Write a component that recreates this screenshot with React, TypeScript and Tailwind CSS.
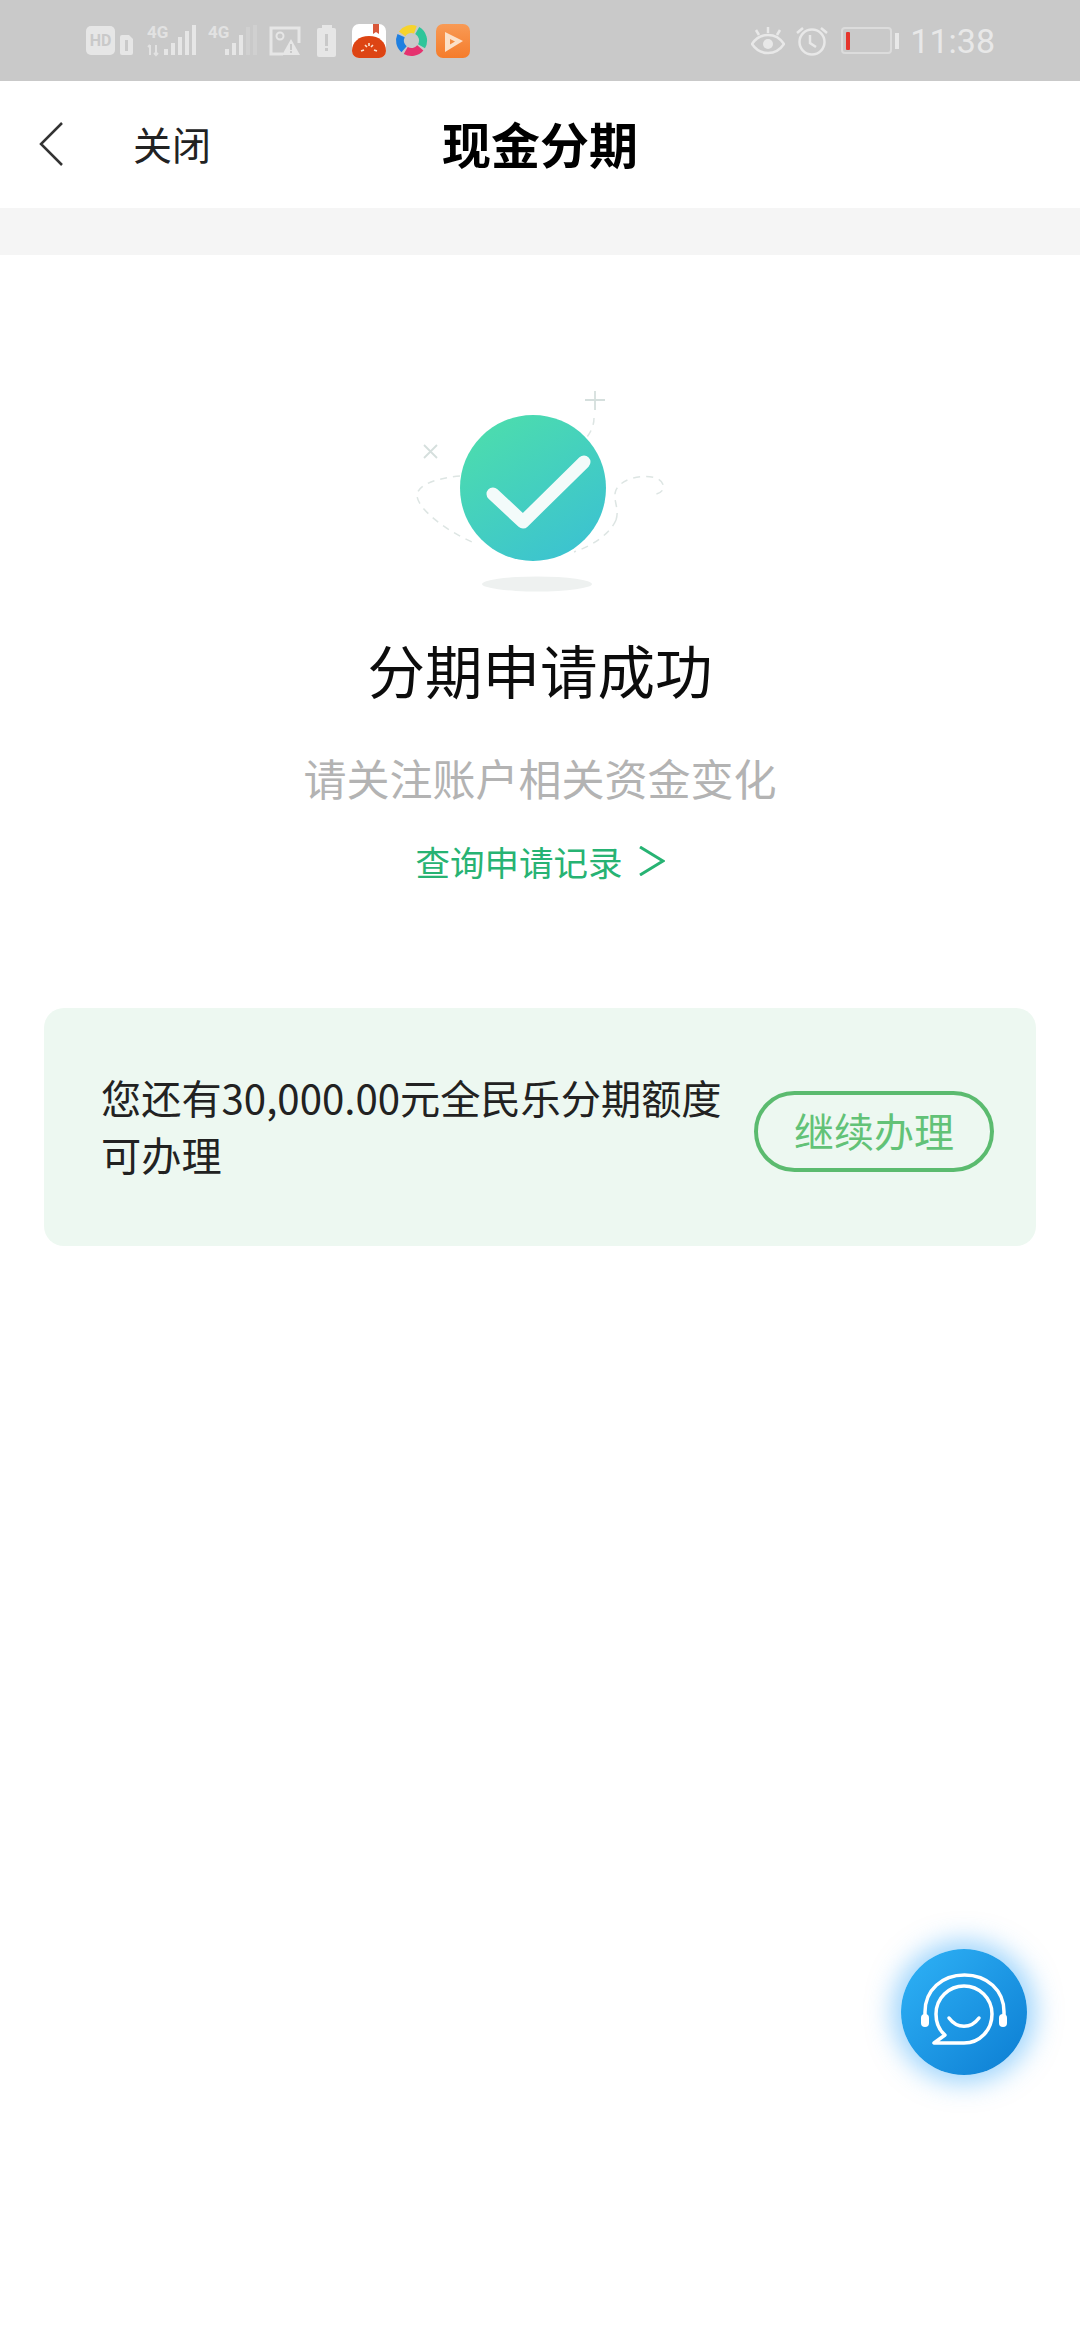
const cjk = "font-['Noto_Sans_CJK_SC','Noto_Sans',sans-serif]";

function HdIcon() {
  return (
    <svg width="48" height="30" viewBox="0 0 48 30" className="mr-[13px]">
      <rect x="0" y="0" width="29" height="29" rx="5" fill="#e6e6e6" />
      <text x="14.5" y="20" textAnchor="middle" fontSize="16" fontWeight="700" fontFamily="Roboto, sans-serif" fill="#c9c9c9">HD</text>
      <path d="M36 9h7l4 4v14a2 2 0 0 1-2 2h-9a2 2 0 0 1-2-2V11a2 2 0 0 1 2-2z" fill="#e6e6e6" />
      <rect x="39" y="14" width="3" height="11" fill="#c9c9c9" />
    </svg>
  );
}

function SignalIcon({ bars, faded, arrows }: { bars: number[]; faded: number; arrows?: boolean }) {
  return (
    <svg width="50" height="36" viewBox="0 -4 50 36" className="mb-[4px] mr-[11px]">
      <text x="0" y="13" fontSize="17" fontWeight="700" fontFamily="Roboto, sans-serif" fill="#e2e2e2">4G</text>
      {arrows && <path d="M3 20v10M1 22l2-2M9 20v10M7 28l2 2 2-2" stroke="#e2e2e2" strokeWidth="2" fill="none" />}
      {bars.map((h, i) => (
        <rect key={i} x={17 + i * 7} y={30 - h} width="4" height={h} fill="#e6e6e6" opacity={i >= bars.length - faded ? 0.25 : 1} />
      ))}
    </svg>
  );
}

function ImageWarnIcon() {
  return (
    <svg width="32" height="30" viewBox="0 0 32 30" className="mr-[16px]">
      <path d="M14 28H2V2h28v15" stroke="#e6e6e6" strokeWidth="3" fill="none" />
      <circle cx="11" cy="10" r="3.5" stroke="#e6e6e6" strokeWidth="2" fill="none" />
      <path d="M22 13l9 16H13z" fill="#e6e6e6" />
      <rect x="21" y="18" width="2" height="6" fill="#c9c9c9" />
      <rect x="21" y="25" width="2" height="2" fill="#c9c9c9" />
    </svg>
  );
}

function BatteryAlertIcon() {
  return (
    <svg width="20" height="32" viewBox="0 0 20 32" className="mr-[15px]">
      <rect x="5" y="0" width="10" height="3" fill="#e6e6e6" />
      <rect x="0" y="3" width="19" height="29" rx="2" fill="#e6e6e6" />
      <rect x="8" y="9" width="3" height="12" fill="#c9c9c9" />
      <rect x="8" y="23" width="3" height="3" fill="#c9c9c9" />
    </svg>
  );
}

function ReaderAppIcon() {
  return (
    <svg width="34" height="34" viewBox="0 0 34 34" className="mr-[9px]">
      <rect width="34" height="34" rx="7" fill="#ffffff" />
      <path d="M0 27c0-9 7-15 17-15s17 6 17 15a7 7 0 0 1-7 7H7a7 7 0 0 1-7-7z" fill="#dd4413" />
      <path d="M21 0h6v10l-3-2-3 2z" fill="#d9583a" />
      <path d="M9 27l3-1M13 21l2 2M21 21l-2 2M25 27l-3-1M17 19v3" stroke="#fbe3d0" strokeWidth="1.6" />
    </svg>
  );
}

function PetalAppIcon() {
  return (
    <svg width="33" height="33" viewBox="0 0 33 33" fill="none" strokeWidth="8" className="mr-[8px]">
      <path d="M7.100 9.900A11.500 11.500 0 0 1 20.400 5.700" stroke="#f6d32d" />
      <path d="M22.250 6.500A11.500 11.500 0 0 1 26.500 22.250" stroke="#2fc59a" />
      <path d="M25.300 23.900A11.500 11.500 0 0 1 10.750 26.500" stroke="#e5326f" />
      <path d="M9.100 25.300A11.500 11.500 0 0 1 6.100 11.600" stroke="#1f7fe0" />
    </svg>
  );
}

function PlayAppIcon() {
  return (
    <svg width="34" height="34" viewBox="0 0 34 34">
      <defs>
        <linearGradient id="playBg" x1="0" y1="0" x2="0" y2="1">
          <stop offset="0" stopColor="#f89a55" />
          <stop offset="1" stopColor="#f57c2b" />
        </linearGradient>
      </defs>
      <rect width="34" height="34" rx="7" fill="url(#playBg)" />
      <path d="M9 8l18 9L9 28z" fill="#fbe0c8" />
      <path d="M14 15l5 2.500-5 3z" fill="#f58a3d" />
    </svg>
  );
}

function EyeIcon() {
  return (
    <svg width="34" height="30" viewBox="0 0 34 30" fill="none" stroke="#e8e8e8" strokeWidth="2.5" className="mr-[11px]">
      <path d="M1 18c4-6 10-9 16-9s12 3 16 9c-4 6-10 9-16 9S5 24 1 18z" />
      <circle cx="17" cy="18" r="5" fill="#e8e8e8" stroke="none" />
      <path d="M17 7V1M8 9L5 4M26 9l3-5" />
    </svg>
  );
}

function AlarmIcon() {
  return (
    <svg width="32" height="30" viewBox="0 0 32 30" fill="none" stroke="#e8e8e8" strokeWidth="2.5" className="mr-[13px]">
      <circle cx="16" cy="16" r="12.5" />
      <path d="M14 9v8l6 4M1 7l6-5M31 7l-6-5" />
    </svg>
  );
}

function BatteryIcon() {
  return (
    <div className="mr-[11px] flex items-center">
      <div className="flex h-[27px] w-[51px] items-center rounded-[4px] border-2 border-[#dcdcdc] pl-[3px]">
        <div className="h-[18px] w-[4px] rounded-[1px] bg-[#e5352c]" />
      </div>
      <div className="ml-[3px] h-[16px] w-[4px] bg-[#e8e8e8]" />
    </div>
  );
}

function SuccessIllustration() {
  return (
    <svg width="290" height="240" viewBox="0 0 290 240" fill="none" className="mr-[10px]">
      <defs>
        <linearGradient id="okBg" x1="0.2" y1="0.05" x2="0.8" y2="0.95">
          <stop offset="0" stopColor="#4cdcae" />
          <stop offset="1" stopColor="#3cc3d0" />
        </linearGradient>
      </defs>
      <g stroke="#dde5e3" strokeWidth="1.5" strokeDasharray="7 6">
        <path d="M70 106C48 108 28 114 27 125c0 14 30 36 55 47" />
        <path d="M226 150c4-12-4-20 0-30 6-12 26-16 40-12 10 4 10 14 0 16" />
        <path d="M204 48c0 10-6 22-20 30" />
        <path d="M226 150c-6 14-24 26-42 32" />
      </g>
      <path d="M205 21v19M195 30h20" stroke="#d5dfdd" strokeWidth="1.8" />
      <path d="M34 75l13 13M47 75L34 88" stroke="#d5dfdd" strokeWidth="1.8" />
      <circle cx="143" cy="118" r="73" fill="url(#okBg)" />
      <path d="M103 124l30 28 61-60" stroke="#f3fbfa" strokeWidth="13" strokeLinecap="round" strokeLinejoin="round" />
      <ellipse cx="147" cy="214" rx="55" ry="7.5" fill="#eef1f0" />
    </svg>
  );
}

function HeadsetIcon() {
  return (
    <svg width="126" height="126" viewBox="21 29 126 126" fill="none" stroke="#ffffff" strokeWidth="3.5" strokeLinecap="round">
      <path d="M45 95V92C45 70 62 55 84.500 55S124 70 124 92v3" />
      <path d="M54 123H84C100 123 112 110 112 94C112 78 99 66 84 66S56 78 56 94C56 103 59 110 65 115Z" strokeLinejoin="round" />
      <path d="M69 98c8 11 22 11 30 0" />
      <rect x="41" y="94" width="8" height="13" rx="4" fill="#ffffff" stroke="none" />
      <rect x="119" y="94" width="8" height="13" rx="4" fill="#ffffff" stroke="none" />
    </svg>
  );
}

export default function App() {
  return (
    <div className={`relative h-[2340px] w-[1080px] overflow-hidden bg-white ${cjk}`}>
      {/* Status bar */}
      <div className="flex h-[81px] items-center justify-between bg-[#c9c9c9] pl-[86px] pr-[85px]">
        <div className="flex items-center">
          <HdIcon />
          <SignalIcon bars={[6, 12, 18, 24, 30]} faded={0} arrows />
          <SignalIcon bars={[6, 12, 20, 28, 30]} faded={2} />
          <ImageWarnIcon />
          <BatteryAlertIcon />
          <ReaderAppIcon />
          <PetalAppIcon />
          <PlayAppIcon />
        </div>
        <div className="flex items-center">
          <EyeIcon />
          <AlarmIcon />
          <BatteryIcon />
          <span className="font-['Roboto',sans-serif] text-[34px] leading-none font-normal text-[#e8e8e8]">11:38</span>
        </div>
      </div>

      {/* Nav bar */}
      <div className="relative flex h-[127px] items-center pl-[39px]">
        <svg width="24" height="44" viewBox="0 0 24 44" fill="none" stroke="#333333" strokeWidth="2.500" className="mb-[2px]">
          <path d="M23 1L2 22l21 21" />
        </svg>
        <span className="mb-[3px] ml-[70px] text-[39px] leading-none text-[#222222]">关闭</span>
        <div className="absolute inset-x-0 top-0 flex h-full items-center justify-center pb-[5px]">
          <span className="text-[49px] leading-none font-bold text-black">现金分期</span>
        </div>
      </div>
      <div className="h-[47px] bg-[#f5f5f5]" />

      {/* Result */}
      <div className="flex flex-col items-center pt-[115px]">
        <SuccessIllustration />
        <h1 className="mt-[24px] text-[57.500px] leading-[70px] font-normal text-[#0c0c0c]">分期申请成功</h1>
        <p className="mt-[43px] text-[43px] leading-[60px] text-[#b3b3b3]">请关注账户相关资金变化</p>
        <div className="mt-[29px] flex h-[50px] items-center">
          <span className="text-[34.500px] leading-none text-[#27b373]">查询申请记录</span>
          <svg width="26" height="30" viewBox="0 0 26 30" fill="none" stroke="#27b373" strokeWidth="3" className="ml-[16px]">
            <path d="M1 1l23 14L1 29" />
          </svg>
        </div>
      </div>

      {/* Remaining quota card */}
      <div className="mx-[44px] mt-[122px] flex h-[238px] items-center justify-between rounded-[20px] bg-[#edf8f1] pl-[57px] pr-[42px]">
        <p className="mb-[5px] w-[640px] text-[40.200px] leading-[57px] text-[#222222]">您还有30,000.00元全民乐分期额度可办理</p>
        <div className="mt-[9px] flex h-[81px] w-[240px] items-center justify-center rounded-full border-4 border-[#5bbb6f] pb-[3px] text-[40px] leading-none text-[#62c277]">
          继续办理
        </div>
      </div>

      {/* Customer service button */}
      <div className="absolute left-[901px] top-[1949px] h-[126px] w-[126px] rounded-full bg-gradient-to-br from-[#2fb3f7] to-[#0b7dd2] shadow-[0_0_26px_8px_rgba(60,170,250,0.5)]">
        <HeadsetIcon />
      </div>
    </div>
  );
}
